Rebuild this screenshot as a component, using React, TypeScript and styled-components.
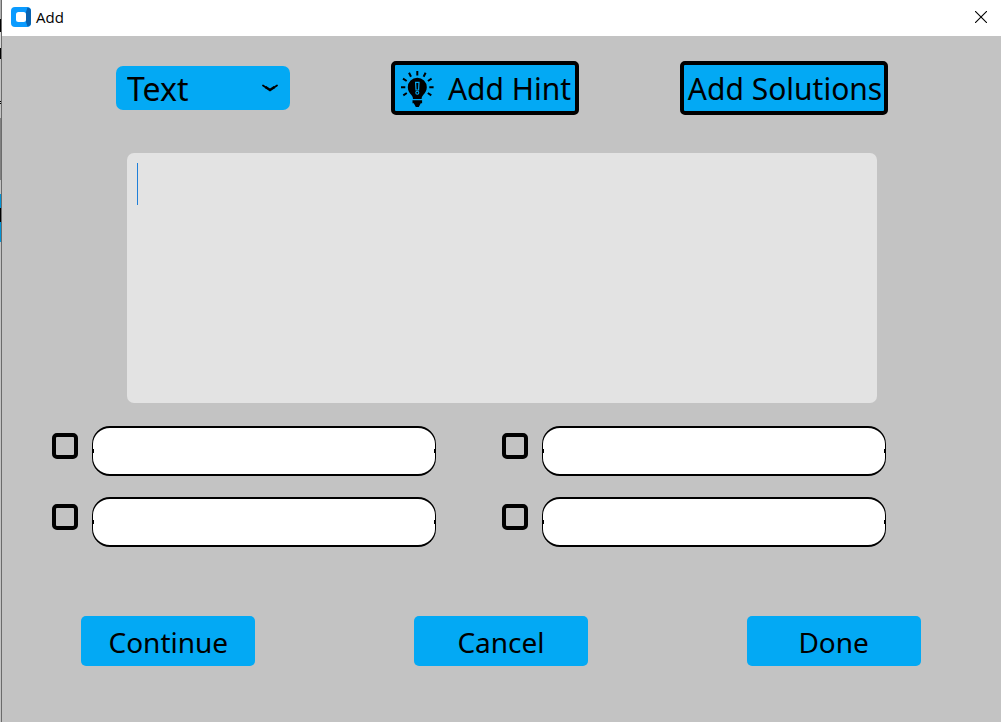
import React from "react";
import styled, { createGlobalStyle } from "styled-components";

const hand = `"Comic Sans MS", "Comic Sans", "Noto Sans", sans-serif`;
const blue = "#03a9f4";
const grey = "#c3c3c3";

const GlobalStyle = createGlobalStyle`
  *, *::before, *::after { box-sizing: border-box; }
  body { margin: 0; background: ${grey}; }
`;

const Screen = styled.div`
  display: flex;
  min-height: 100vh;
`;

const Backdrop = styled.div`
  flex: none;
  width: 2px;
  border-right: 1px solid #6b6b6b;
  background: linear-gradient(
    #b0b0b0 0 19px, #000 19px 32px, #d8d8d8 32px 48px, #000 48px 59px,
    ${grey} 59px 101px, #000 101px 102px, ${grey} 102px 103px, #000 103px 104px,
    ${grey} 104px 118px, #808080 118px 180px, ${grey} 180px 194px,
    #0394d6 194px 208px, #000 208px 222px, #0394d6 222px 242px, ${grey} 242px
  );
`;

const Window = styled.div`
  flex: 1;
  min-width: 0;
  background: ${grey};
`;

const TitleBar = styled.header`
  display: flex;
  align-items: center;
  gap: 5px;
  height: 36px;
  padding: 0 14px 2px 9px;
  background: #fff;
`;

const Title = styled.h1`
  flex: 1;
  margin: 0;
  font: 400 15px/20px "Segoe UI", "Open Sans", sans-serif;
  color: #000;
`;

const CloseButton = styled.button`
  display: flex;
  padding: 0;
  border: 0;
  background: none;
`;

const Toolbar = styled.div`
  display: flex;
  align-items: center;
  justify-content: space-between;
  padding: 25px 113px 0 114px;
`;

const SelectBox = styled.div`
  display: grid;
  align-items: center;
  width: 174px;

  > * { grid-area: 1 / 1; }
  > svg { justify-self: end; margin-right: 12px; pointer-events: none; }
`;

const KindSelect = styled.select`
  appearance: none;
  width: 100%;
  height: 44px;
  padding: 2px 36px 0 11px;
  border: 0;
  border-radius: 7px;
  background: ${blue};
  color: #000;
  font: 400 32px/40px ${hand};
`;

const Button = styled.button`
  display: flex;
  align-items: center;
  justify-content: center;
  width: 174px;
  height: 50px;
  padding: 2px 0 0;
  border: 0;
  border-radius: 5px;
  background: ${blue};
  color: #000;
  font: 400 28px/40px ${hand};
  white-space: nowrap;
`;

const ToolButton = styled(Button)<{ $width: number }>`
  gap: 14px;
  width: ${(p) => p.$width}px;
  height: 54px;
  padding-left: 2px;
  border: 4px solid #000;
  font-size: 30px;
`;

const Question = styled.div`
  padding: 38px 124px 0 125px;
`;

const QuestionText = styled.textarea`
  display: block;
  width: 100%;
  height: 250px;
  padding: 10px;
  border: 0;
  border-radius: 7px;
  outline: 0;
  resize: none;
  background: linear-gradient(#1f7fd8, #1f7fd8) 10px 10px / 1px 42px no-repeat #e3e3e3;
  font: 400 30px/42px ${hand};
`;

const Answers = styled.div`
  display: grid;
  grid-template-columns: 1fr 1fr;
  gap: 21px 66px;
  padding: 23px 115px 0 50px;
`;

const Answer = styled.div`
  display: flex;
  align-items: flex-start;
  gap: 14px;
  min-width: 0;
`;

const Tick = styled.input`
  appearance: none;
  flex: none;
  width: 26px;
  height: 26px;
  margin: 7px 0 0;
  border: 4px solid #000;
  border-radius: 5px;

  &:checked { background: ${blue}; }
`;

const AnswerText = styled.input`
  flex: 1;
  min-width: 0;
  height: 50px;
  padding: 0 16px;
  border: solid #000;
  border-width: 2px 1px;
  border-radius: 18px;
  outline: 0;
  background:
    linear-gradient(#000, #000) left center / 1px 4px no-repeat,
    linear-gradient(#000, #000) right center / 1px 4px no-repeat,
    #fff;
  font: 400 24px/32px ${hand};
`;

const Actions = styled.div`
  display: grid;
  grid-template-columns: repeat(3, 1fr);
  justify-items: center;
  padding: 69px 1px 56px 0;
`;

const AppIcon = () => (
  <svg width="20" height="20" viewBox="0 0 20 20" aria-hidden="true">
    <rect width="20" height="20" rx="4" fill="#0a9bff" />
    <path d="M15 5l1.500-4.600q3.500.8 3.500 3.600v12q0 2.800-3.500 3.600L15 15z" fill="#0862b0" />
    <rect x="5" y="5" width="10" height="10" rx="2.500" fill="#fff" />
  </svg>
);

const CloseIcon = () => (
  <svg width="12" height="12" viewBox="0 0 12 12" aria-hidden="true">
    <path d="M0 0l12 12M12 0L0 12" stroke="#000" strokeWidth="1.100" />
  </svg>
);

const Chevron = () => (
  <svg width="16" height="8" viewBox="0 0 16 8" aria-hidden="true">
    <path d="M1 1.500L4 3.500M15 1.500L12 3.500" fill="none" stroke="#000" strokeWidth="1.800" strokeLinecap="round" />
    <path d="M3.500 3L8 6L12.500 3" fill="none" stroke="#000" strokeWidth="2.600" />
  </svg>
);

const Bulb = () => (
  <svg width="33" height="37" viewBox="0 0 33 37" aria-hidden="true">
    <path
      d="M16.300 0v4.500M8 1.800l2 4M24.600 1.800l-2 4M2 7.600L5.700 10M30.600 7.600L26.900 10M0 16.300h4.300M28.300 16.300h4.300M2.300 24.300l3.500-2.300M30.300 24.300L26.800 22"
      stroke="#000"
      strokeWidth="2"
    />
    <path d="M16.300 6.800a9.500 9.500 0 0 0-9.500 9.500c0 3.600 1.900 5.700 3.600 7.700 1 1.300 1.500 2.300 1.600 4h8.600c.1-1.700.6-2.700 1.600-4 1.700-2 3.600-4.100 3.600-7.700a9.500 9.500 0 0 0-9.500-9.500z" />
    <path d="M11.500 29.300h9.600v3h-1.300l-2 3.700h-3l-2-3.700h-1.300z" />
    <path d="M14.600 11.300h3.400l-.4 7.700h-2.600z" fill="none" stroke={blue} strokeWidth="1.200" />
    <circle cx="16.300" cy="21.800" r="1.500" fill="none" stroke={blue} strokeWidth="1.100" />
  </svg>
);

export default function App() {
  return (
    <Screen>
      <GlobalStyle />
      <Backdrop />
      <Window>
        <TitleBar>
          <AppIcon />
          <Title>Add</Title>
          <CloseButton type="button" aria-label="Close">
            <CloseIcon />
          </CloseButton>
        </TitleBar>
        <form onSubmit={(e) => e.preventDefault()}>
          <Toolbar>
            <SelectBox>
              <KindSelect aria-label="Question type" defaultValue="Text">
                <option>Text</option>
              </KindSelect>
              <Chevron />
            </SelectBox>
            <ToolButton type="button" $width={188}>
              <Bulb />
              Add Hint
            </ToolButton>
            <ToolButton type="button" $width={208}>
              Add Solutions
            </ToolButton>
          </Toolbar>
          <Question>
            <QuestionText aria-label="Question" />
          </Question>
          <Answers>
            {[1, 2, 3, 4].map((n) => (
              <Answer key={n}>
                <Tick type="checkbox" aria-label={`Answer ${n} is correct`} />
                <AnswerText type="text" aria-label={`Answer ${n}`} />
              </Answer>
            ))}
          </Answers>
          <Actions>
            <Button type="button">Continue</Button>
            <Button type="button">Cancel</Button>
            <Button type="submit">Done</Button>
          </Actions>
        </form>
      </Window>
    </Screen>
  );
}
